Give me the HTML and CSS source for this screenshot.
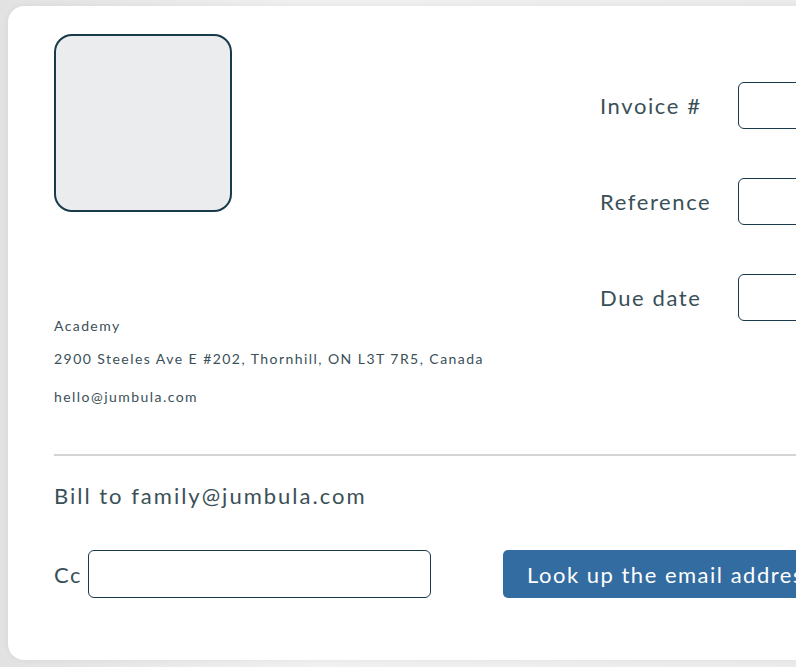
FILE: index.html
```html
<!DOCTYPE html>
<html lang="en">
<head>
<meta charset="utf-8">
<title>Invoice</title>
<link rel="stylesheet" href="styles.css">
</head>
<body>
<div class="frame">
  <div class="card">
    <div class="header">
      <div class="company">
        <div class="logo"></div>
        <p class="company-name">Academy</p>
        <p class="company-line">2900 Steeles Ave E #202, Thornhill, ON L3T 7R5, Canada</p>
        <p class="company-line email">hello@jumbula.com</p>
      </div>
      <div class="fields">
        <div class="field"><label class="field-label">Invoice #</label><input class="field-input" type="text"></div>
        <div class="field"><label class="field-label">Reference</label><input class="field-input" type="text"></div>
        <div class="field"><label class="field-label">Due date</label><input class="field-input" type="text"></div>
      </div>
    </div>
    <hr class="divider">
    <p class="bill-to">Bill to family@jumbula.com</p>
    <div class="cc-row">
      <label class="cc-label">Cc</label>
      <input class="cc-input" type="text">
      <button class="lookup" type="button">Look up the email address</button>
    </div>
  </div>
</div>
</body>
</html>
```
FILE: styles.css
```css
html, body {
  margin: 0;
  padding: 0;
  overflow: hidden;
}
body {
  background: linear-gradient(90deg, #e2e2e2 0%, #f1f1f1 40%, #ebebeb 100%);
  font-family: "Lato", "Noto Sans", sans-serif;
  color: #3a5058;
  width: 796px;
  height: 667px;
}
.frame {
  padding: 6px 0 0 8px;
}
.card {
  box-sizing: border-box;
  width: 1000px;
  height: 654px;
  background: #fff;
  border-radius: 16px;
  padding: 28px 46px 0 46px;
  box-shadow: 0 0 6px rgba(0,0,0,0.06);
}
.header {
  display: flex;
}
.company {
  width: 546px;
}
.logo {
  box-sizing: border-box;
  width: 178px;
  height: 178px;
  background: #eaecee;
  border: 2px solid #183a4a;
  border-radius: 18px;
}
.company-name {
  margin: 104px 0 0 0;
  font-size: 14px;
  letter-spacing: 1.4px;
  line-height: 20px;
}
.company-line {
  margin: 13px 0 0 0;
  font-size: 14px;
  letter-spacing: 1.45px;
  line-height: 20px;
}
.company-line.email {
  margin-top: 18px;
}
.fields {
  display: flex;
  flex-direction: column;
  gap: 49px;
  padding-top: 48px;
}
.field {
  display: flex;
  align-items: center;
}
.field-label {
  width: 138px;
  font-size: 22px;
  letter-spacing: 1.6px;
}
.field-input {
  box-sizing: border-box;
  width: 200px;
  height: 47px;
  border: 1.5px solid #183a4a;
  border-radius: 6px;
  background: #fff;
  margin: 0;
}
.divider {
  margin: 47px 0 0 0;
  border: 0;
  border-top: 2px solid #d2d4d5;
  height: 0;
}
.bill-to {
  margin: 26px 0 0 0;
  font-size: 22px;
  letter-spacing: 2px;
  line-height: 28px;
}
.cc-row {
  display: flex;
  align-items: center;
  margin-top: 40px;
}
.cc-label {
  font-size: 22px;
  letter-spacing: 1.5px;
  width: 34px;
}
.cc-input {
  box-sizing: border-box;
  width: 343px;
  height: 48px;
  border: 1.5px solid #183a4a;
  border-radius: 6px;
  margin: 0;
  background: #fff;
}
.lookup {
  margin-left: 72px;
  height: 48px;
  padding: 0 24px;
  border: 0;
  border-radius: 5px;
  background: #336ca0;
  color: #fff;
  font-family: "Lato", "Noto Sans", sans-serif;
  font-size: 22px;
  letter-spacing: 1.5px;
  white-space: nowrap;
}
```
